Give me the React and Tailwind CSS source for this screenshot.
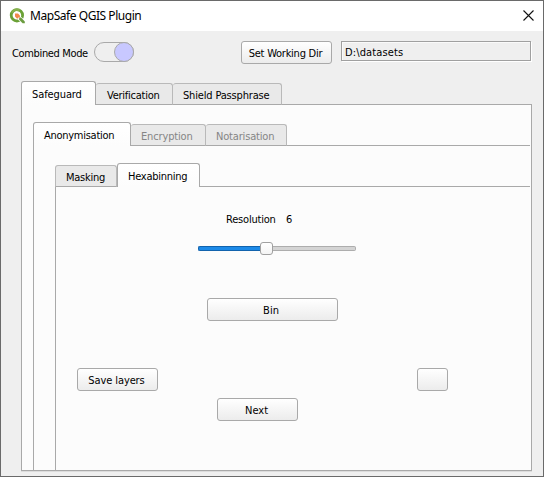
import React from 'react';

function Button({ className = '', children }) {
  return (
    <button
      className={`flex h-[23px] shrink-0 items-center justify-center whitespace-nowrap rounded-[3px] border border-[#a9a9a9] bg-linear-to-b from-white to-[#ececec] pt-[2px] ${className}`}
    >
      {children}
    </button>
  );
}

function Tab({ active, disabled, className = '', children }) {
  const state = active
    ? 'h-[24px] pt-[3px] border-[#a9a9a9] bg-linear-to-b from-white to-[#fcfcfc]'
    : 'h-[22px] pt-[3px] border-[#b9b9b9] border-b border-b-[#a9a9a9] bg-[#e9e9e9]';
  return (
    <div
      className={`flex shrink-0 items-center whitespace-nowrap rounded-t-[3px] border-t border-r ${state} ${disabled ? 'text-[#858585]' : ''} ${className}`}
    >
      {children}
    </div>
  );
}

function Logo() {
  return (
    <svg width="17" height="16" viewBox="0 0 17 16" className="shrink-0">
      <circle cx="7.9" cy="7.3" r="5.7" fill="none" stroke="#6aa136" strokeWidth="2.8" />
      <path d="M3 4.6A5.6 5.6 0 0 1 10.6 2.4" fill="none" stroke="#86b04c" strokeWidth="2.4" />
      <path d="M8 8h3.4l5 5v2.6h-3.2L8 10.8z" fill="#fff" />
      <path d="M10.2 9.6h1.8l3.8 3.8v1.8h-2.2l-3.4-3.4z" fill="#6b9c40" />
      <path d="M6 5.6h3l1.9 2v1.8H9.2v1H7.9L6 8.6z" fill="#f0894a" />
    </svg>
  );
}

export default function App() {
  return (
    <div className="flex h-[477px] w-[544px] flex-col overflow-hidden border border-[#6a6a6a] bg-[#efefef] font-['DejaVu_Sans_Condensed','DejaVu_Sans',sans-serif] text-[11px] leading-[14px] text-black [font-stretch:condensed]">
      <header className="flex h-[30px] shrink-0 items-center bg-white pl-[8px] pr-[9px]">
        <Logo />
        <h1 className="ml-[4px] whitespace-nowrap font-['Noto_Sans',sans-serif] text-[12px] tracking-[-0.45px]">MapSafe QGIS Plugin</h1>
        <svg width="11" height="11" viewBox="0 0 11 11" className="mb-[2px] ml-auto">
          <path d="M.5 .5l10 10M10.5 .5l-10 10" stroke="#111" strokeWidth="1.1" />
        </svg>
      </header>

      <div className="flex h-[50px] shrink-0 items-start pt-[10px]">
        <span className="ml-[11px] mt-[6px] w-[82px] whitespace-nowrap tracking-[-0.35px]">Combined Mode</span>
        <div className="mt-px flex h-[20px] w-[40px] justify-end rounded-full border border-[#a9a9a9]">
          <div className="-my-px -mr-px size-[20px] rounded-full border border-[#a9a9a9] bg-[#c8c8ff]" />
        </div>
        <Button className="ml-[107px] w-[91px] pr-[2px] tracking-[-0.25px]">Set Working Dir</Button>
        <div className="ml-[9px] flex h-[20px] w-[190px] items-center whitespace-nowrap border border-[#a0a0a0] pl-[3px] pt-[3px] tracking-[0.12px] shadow-[1px_1px_0_#fff,inset_1px_1px_0_#fafafa]">
          D:\datasets
        </div>
      </div>

      <section className="ml-[20px] w-[511px]">
        <div className="flex items-end">
          <Tab active className="w-[75px] border-l pl-[10px] tracking-[-0.1px]">Safeguard</Tab>
          <Tab className="w-[77px] pl-[11px] tracking-[-0.25px]">Verification</Tab>
          <Tab className="w-[109px] pl-[10px] tracking-[-0.17px]">Shield Passphrase</Tab>
          <div className="h-px grow bg-[#a9a9a9]" />
        </div>
        <div className="h-[366px] border-x border-b border-[#a9a9a9] bg-[#fcfcfc] pl-[11px] pr-px pt-[17px] shadow-[0_1px_0_#dcdcdc]">
          <div className="flex items-end">
            <Tab active className="w-[98px] border-l pl-[10px] tracking-[-0.27px]">Anonymisation</Tab>
            <Tab disabled className="w-[75px] pl-[10px] tracking-[-0.15px]">Encryption</Tab>
            <Tab disabled className="w-[81px] pl-[10px] tracking-[-0.17px]">Notarisation</Tab>
            <div className="h-px grow bg-[#a9a9a9]" />
          </div>
          <div className="h-[324px] border-l border-[#a9a9a9] pl-[21px] pt-[17px]">
            <div className="flex items-end">
              <Tab className="w-[62px] border-l pl-[10px] tracking-[-0.25px]">Masking</Tab>
              <Tab active className="w-[83px] border-l pl-[10px] tracking-[-0.25px]">Hexabinning</Tab>
              <div className="h-px grow bg-[#a9a9a9]" />
            </div>
            <div className="flex h-[283px] flex-col border-l border-[#a9a9a9] pt-[26px]">
              <div className="flex h-[14px] shrink-0 pl-[170px]">
                <span className="w-[60px] whitespace-nowrap tracking-[-0.2px]">Resolution</span>
                <span>6</span>
              </div>
              <div className="ml-[142px] mt-[15px] flex h-[13px] w-[158px] shrink-0 items-center">
                <div className="h-[5px] w-[62px] rounded-l-[2px] border border-r-0 border-[#1263ad] bg-[#1c8ae8]" />
                <div className="size-[13px] rounded-[3px] border border-[#a0a0a0] bg-linear-to-b from-white to-[#f4f4f4]" />
                <div className="h-[5px] grow rounded-r-[2px] border border-l-0 border-[#adadad] bg-[#d4d4d4]" />
              </div>
              <Button className="ml-[151px] mt-[43px] w-[131px] pr-[3px]">Bin</Button>
              <div className="mt-[47px] flex shrink-0">
                <Button className="ml-[21px] w-[81px] pr-[2px] tracking-[-0.1px]">Save layers</Button>
                <Button className="ml-[259px] w-[31px]" />
              </div>
              <Button className="ml-[161px] mt-[7px] w-[81px] pr-[2px]">Next</Button>
            </div>
          </div>
        </div>
      </section>
    </div>
  );
}
